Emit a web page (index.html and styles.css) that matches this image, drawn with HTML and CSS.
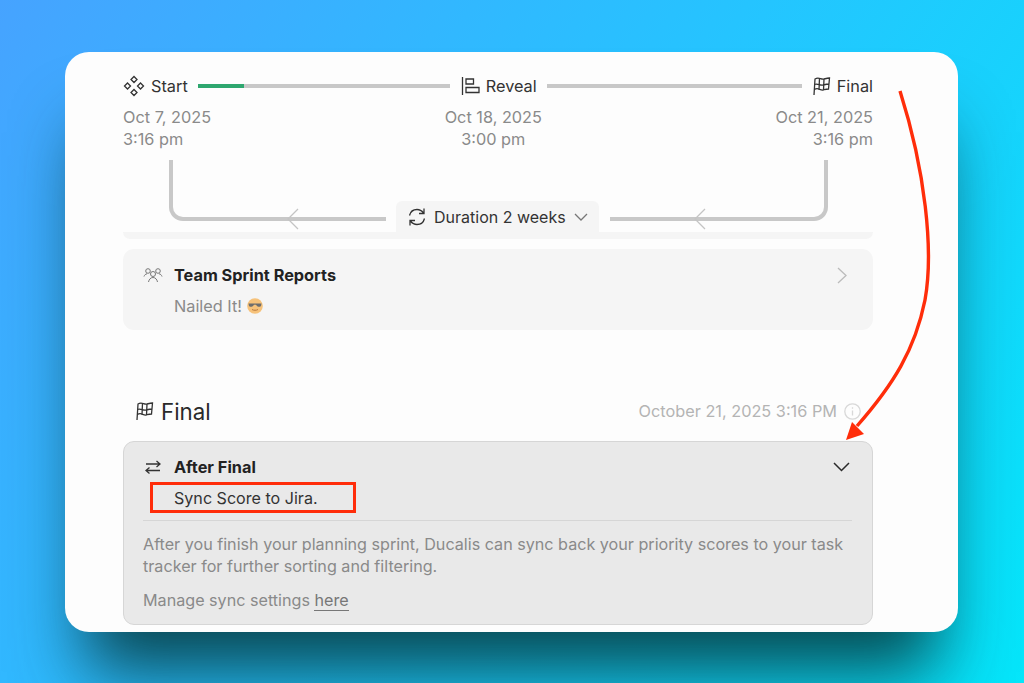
FILE: index.html
```html
<!DOCTYPE html>
<html lang="en">
<head>
  <meta charset="UTF-8" />
  <title>Sprint timeline</title>
  <link rel="stylesheet" href="styles.css">
</head>
<body>
  <div class="card">

    <!-- Timeline -->
    <div class="timeline">
      <div class="stage">
        <svg class="icon stage-icon" width="22" height="22" viewBox="0 0 22 22"><path d="M11 1.500l3 3-3 3-3-3zM4.500 8l3 3-3 3-3-3zM17.500 8l3 3-3 3-3-3zM11 14.500l3 3-3 3-3-3z"/></svg>
        <span>Start</span>
      </div>
      <div class="track track-start"><div class="track-done"></div></div>
      <div class="stage">
        <svg class="icon stage-icon" width="19" height="20" viewBox="0 0 19 20"><path d="M1.500 1v18M5 3h7.500v5H5zM5 11.500h13v5H5z"/></svg>
        <span>Reveal</span>
      </div>
      <div class="track track-end"></div>
      <div class="stage">
        <svg class="icon stage-icon" width="19" height="20" viewBox="0 0 19 20"><path d="M2 19L3 3c4-2.500 6 1 9 0 2-.5 4-1 5.500-1l-1 11c-2 0-3.500.5-5.500 1-3 .5-5-3-8.500-.5M7.500 2l-.5 12M12 3l-.5 11M2.500 8.500c3-1.500 6 1.500 8.500.5 2-.5 4-1 6-1"/></svg>
        <span>Final</span>
      </div>
    </div>

    <div class="dates">
      <div>Oct 7, 2025<br>3:16 pm</div>
      <div class="dates-mid">Oct 18, 2025<br>3:00 pm</div>
      <div class="dates-end">Oct 21, 2025<br>3:16 pm</div>
    </div>

    <!-- Loop back -->
    <div class="loop">
      <div class="bracket bracket-left">
        <svg class="icon bracket-arrow arrow-left" width="12" height="22" viewBox="0 0 12 22"><path d="M11 1L1 11l10 10"/></svg>
      </div>
      <div class="duration">
        <svg class="icon" width="20" height="20" viewBox="0 0 20 20"><path d="M2.500 8.500C3.500 4.500 6.500 2.500 10 2.500c3 0 5 1.500 6.500 3.500M17 1.500V6.500h-5M17.500 11.500c-1 4-4 6-7.500 6-3 0-5-1.500-6.500-3.500M3 18.500v-5h5"/></svg>
        <span>Duration 2 weeks</span>
        <svg class="icon chevron-small" width="14" height="8" viewBox="0 0 14 8"><path d="M1 1l6 6 6-6"/></svg>
      </div>
      <div class="bracket bracket-right">
        <svg class="icon bracket-arrow arrow-right" width="12" height="22" viewBox="0 0 12 22"><path d="M11 1L1 11l10 10"/></svg>
      </div>
    </div>
    <div class="strip"></div>

    <!-- Team reports -->
    <div class="panel">
      <div class="panel-head">
        <svg class="icon panel-icon people" width="20" height="16" viewBox="0 0 20 16"><circle cx="5" cy="4" r="2.300"/><circle cx="15" cy="4" r="2.300"/><circle cx="10" cy="7" r="2.500"/><path d="M1 9.500c.5-1.500 1.500-2.500 3-2.700M19 9.500c-.5-1.500-1.500-2.500-3-2.700M5.500 15c.5-2.500 2-4.500 4.500-4.500s4 2 4.500 4.500"/></svg>
        <strong>Team Sprint Reports</strong>
        <svg class="icon chevron-right" width="10" height="17" viewBox="0 0 10 17"><path d="M1 1l8 7.500L1 16"/></svg>
      </div>
      <div class="panel-sub">
        <span>Nailed It!</span>
        <svg class="emoji" width="16" height="16" viewBox="0 0 16 16"><circle cx="8" cy="8" r="7.800" fill="#f6c27a"/><path d="M1.500 5.500h13l-.5 2.500c-.3 1-3.500 1-4 0L9 6.800H7L6 8c-.5 1-3.700 1-4 0z" fill="#6d6d6d"/><path d="M5 11.500c1.500 1 4.500 1 6 0" fill="none" stroke="#b9793f"/></svg>
      </div>
    </div>

    <!-- Final section -->
    <div class="section-head">
      <div class="section-title">
        <svg class="icon" width="19" height="20" viewBox="0 0 19 20"><path d="M2 19L3 3c4-2.500 6 1 9 0 2-.5 4-1 5.500-1l-1 11c-2 0-3.500.5-5.500 1-3 .5-5-3-8.500-.5M7.500 2l-.5 12M12 3l-.5 11M2.500 8.500c3-1.500 6 1.500 8.500.5 2-.5 4-1 6-1"/></svg>
        <span>Final</span>
      </div>
      <div class="section-date">
        <span>October 21, 2025 3:16 PM</span>
        <svg class="icon info" width="17" height="17" viewBox="0 0 17 17"><circle cx="8.500" cy="8.500" r="7.700"/><path d="M8.500 7.500v5M8.500 4.300v1.400"/></svg>
      </div>
    </div>

    <div class="panel panel-open">
      <div class="panel-head">
        <svg class="icon panel-icon sync" width="16" height="14" viewBox="0 0 16 14"><path d="M1 4h14M11.500 1L15 4l-3.500 3M15 10.500H1M4.500 7.500L1 10.500l3.500 3"/></svg>
        <strong>After Final</strong>
        <svg class="icon chevron-down" width="17" height="10" viewBox="0 0 17 10"><path d="M1 1l7.500 7.500L16 1"/></svg>
      </div>
      <div class="panel-sub panel-sub-dark">Sync Score to Jira.</div>
      <div class="panel-body">
        <p>After you finish your planning sprint, Ducalis can sync back your priority scores to your task tracker for further sorting and filtering.</p>
        <p class="manage">Manage sync settings <a href="#">here</a></p>
      </div>
    </div>
  </div>

  <!-- Annotations on top of the screenshot -->
  <div class="red-box"></div>
  <svg class="red-arrow" width="1024" height="683" viewBox="0 0 1024 683">
    <path d="M900 91C925 170 934 250 925 300C915 350 893 385 857 426" fill="none" stroke="#ff2d0a" stroke-width="3.400"/>
    <path d="M846 440L852 422L864 434z" fill="#ff2d0a"/>
  </svg>
</body>
</html>
```

FILE: styles.css
```css
html, body {
  height: 100%;
}

body {
  margin: 0;
  overflow: hidden;
  position: relative;
  font-family: "Inter", "Liberation Sans", sans-serif;
  font-size: 16.3px;
  color: #333;
  background: linear-gradient(125deg, #46a3ff 0%, #25c4ff 50%, #04e6fa 100%);
}

.card {
  box-sizing: border-box;
  width: 893px;
  height: 580px;
  margin: 52px 0 0 65px;
  padding: 22px 85px 0 58px;
  overflow: hidden;
  background: #fdfdfd;
  border-radius: 24px;
  box-shadow: 0 60px 70px -20px rgba(6, 58, 62, 0.9);
}

.icon {
  fill: none;
  stroke: #333;
  stroke-width: 1.300;
  flex: none;
}

/* timeline */
.timeline {
  display: flex;
  align-items: center;
  height: 24px;
}

.stage {
  display: flex;
  align-items: center;
  gap: 6px;
  flex: none;
}

.track {
  height: 4px;
  background: #c8c8c8;
}

.track-start {
  width: 252px;
  margin: 0 11px 0 10px;
}

.track-end {
  width: 255px;
  margin: 0 10px;
}

.track-done {
  width: 46px;
  height: 100%;
  background: #2ea76f;
}

.dates {
  display: flex;
  justify-content: space-between;
  margin-top: 8px;
  line-height: 22px;
  color: #8a8a8a;
}

.dates-mid {
  text-align: center;
}

.dates-end {
  text-align: right;
}

/* bracket under the dates */
.loop {
  display: flex;
  align-items: flex-end;
  margin-top: 10px;
  height: 72px;
}

.bracket {
  position: relative;
  box-sizing: border-box;
  height: 61px;
  margin-bottom: 11px;
  border-bottom: 4px solid #c8c8c8;
}

.bracket-left {
  width: 217px;
  margin-left: 46px;
  border-left: 4px solid #c8c8c8;
  border-bottom-left-radius: 14px;
}

.bracket-right {
  width: 218px;
  margin-left: 11px;
  border-right: 4px solid #c8c8c8;
  border-bottom-right-radius: 14px;
}

.bracket-arrow {
  position: absolute;
  bottom: -13px;
  stroke: #c4c4c4;
}

.arrow-left {
  left: 114px;
}

.arrow-right {
  left: 84px;
}

.duration {
  display: flex;
  align-items: center;
  gap: 7px;
  box-sizing: border-box;
  width: 203px;
  height: 31px;
  margin-left: 10px;
  padding-left: 11px;
  font-size: 16px;
  background: #f5f5f5;
  border-radius: 6px 6px 0 0;
}

.chevron-small {
  stroke: #777;
  margin-left: 1px;
}

.strip {
  height: 7px;
  background: #f5f5f5;
  border-radius: 0 0 8px 8px;
}

/* panels */
.panel {
  box-sizing: border-box;
  height: 81px;
  margin-top: 10px;
  padding: 15px 20px 0 20px;
  background: #f5f5f5;
  border-radius: 11px;
}

.panel-head {
  display: flex;
  align-items: center;
  height: 22px;
}

.panel-head strong {
  font-weight: 700;
  color: #222;
}

.panel-icon {
  margin-right: 11px;
}

.people {
  stroke: #777;
  stroke-width: 1;
}

.chevron-right {
  margin-left: auto;
  margin-right: 6px;
  stroke: #bbb;
}

.panel-sub {
  display: flex;
  align-items: center;
  gap: 5px;
  margin: 9px 0 0 31px;
  line-height: 22px;
  color: #8a8a8a;
}

.emoji {
  flex: none;
}

.section-head {
  display: flex;
  align-items: center;
  justify-content: space-between;
  margin-top: 67px;
  padding: 0 12px;
  height: 28px;
}

.section-title {
  display: flex;
  align-items: center;
  gap: 7px;
  font-size: 22.300px;
  color: #2a2a2a;
}

.section-date {
  display: flex;
  align-items: center;
  gap: 7px;
  color: #b4b4b4;
}

.info {
  stroke: #d8d8d8;
}

.panel-open {
  height: 184px;
  margin-top: 16px;
  padding: 14px 20px 0 19px;
  background: #e9e9e9;
  border: 1px solid #d6d6d6;
}

.panel-open .chevron-down {
  margin-left: auto;
  margin-right: 2px;
  stroke: #2a2a2a;
  stroke-width: 1.500;
}

.sync {
  margin-left: 2px;
  margin-right: 13px;
}

.panel-sub-dark {
  margin-top: 9px;
  color: #333;
  font-size: 16.100px;
}

.panel-body {
  margin-top: 11px;
  padding-top: 12px;
  border-top: 1px solid #d6d6d6;
  color: #8a8a8a;
  font-size: 16.150px;
  line-height: 22px;
}

.panel-body p {
  margin: 0;
}

.panel-body .manage {
  margin-top: 12px;
}

.manage a {
  color: #777;
  text-decoration: none;
  border-bottom: 1px solid #777;
}

/* annotations */
.red-box {
  position: absolute;
  left: 150px;
  top: 482px;
  width: 200px;
  height: 25px;
  border: 3px solid #ff2d0a;
}

.red-arrow {
  position: absolute;
  left: 0;
  top: 0;
}
```
